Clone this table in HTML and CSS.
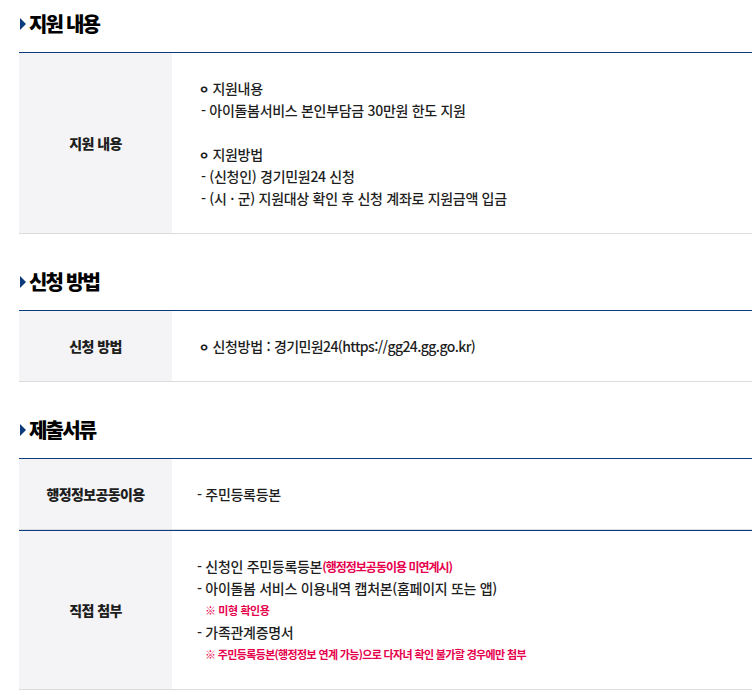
FILE: index.html
```html
<!DOCTYPE html>
<html lang="ko">
<head>
    <meta charset="UTF-8"/>
    <meta name="viewport" content="width=device-width, initial-scale=1.0"/>
    <title>지원 안내</title>
    <link rel="stylesheet" href="styles.css">
</head>
<body>

<div class="content">

    <section class="section">
        <h2 class="sec-title">지원 내용</h2>
        <table class="info-table">
            <tr>
                <th>지원 내용</th>
                <td>
                    <p><span class="dot">ㅇ</span> 지원내용</p>
                    <p class="sub">- 아이돌봄서비스 본인부담금 30만원 한도 지원</p>
                    <p>&nbsp;</p>
                    <p><span class="dot">ㅇ</span> 지원방법</p>
                    <p class="sub">- (신청인) 경기민원24 신청</p>
                    <p class="sub">- (시 · 군) 지원대상 확인 후 신청 계좌로 지원금액 입금</p>
                </td>
            </tr>
        </table>
    </section>

    <section class="section">
        <h2 class="sec-title">신청 방법</h2>
        <table class="info-table">
            <tr>
                <th>신청 방법</th>
                <td>
                    <p><span class="dot">ㅇ</span> 신청방법 : <span class="url">경기민원24(https://gg24.gg.go.kr)</span></p>
                </td>
            </tr>
        </table>
    </section>

    <section class="section">
        <h2 class="sec-title">제출서류</h2>
        <table class="info-table">
            <tr>
                <th>행정정보공동이용</th>
                <td>
                    <p>- 주민등록등본</p>
                </td>
            </tr>
        </table>
        <table class="info-table">
            <tr>
                <th>직접 첨부</th>
                <td>
                    <p>- 신청인 주민등록등본<span class="note inline">(행정정보공동이용 미연계시)</span></p>
                    <p>- 아이돌봄 서비스 이용내역 캡처본(홈페이지 또는 앱)</p>
                    <p class="note indent">※ 미형 확인용</p>
                    <p>- 가족관계증명서</p>
                    <p class="note indent long">※ 주민등록등본(행정정보 연계 가능)으로 다자녀 확인 불가할 경우에만 첨부</p>
                </td>
            </tr>
        </table>
    </section>

</div>

</body>
</html>
```

FILE: styles.css
```css
:root {
    --navy: #0d3c7d;
    --text-color: #1e1e1e;
    --line-color: #dcdcdc;
    --label-bg: #f4f4f6;
    --note-color: #e6004c;
}

* {
    margin: 0;
    padding: 0;
    box-sizing: border-box;
}

body {
    font-family: "Noto Sans CJK KR", "Noto Sans", sans-serif;
    font-size: 14px;
    line-height: 22px;
    letter-spacing: -0.3px;
    font-weight: 500;
    color: var(--text-color);
    background-color: #fff;
    overflow: hidden;
}

.content {
    padding-left: 19px;
    width: 780px;
}

.section {
    margin-top: 33px;
}

.section:first-child {
    margin-top: 9px;
}

.sec-title {
    position: relative;
    padding-left: 10px;
    font-size: 20px;
    line-height: 30px;
    letter-spacing: -1.8px;
    font-weight: 900;
    color: #000;
    margin-bottom: 13px;
}

.sec-title::before {
    content: "";
    position: absolute;
    left: 1px;
    top: 9px;
    border-style: solid;
    border-width: 6px 0 6px 6px;
    border-color: transparent transparent transparent var(--navy);
}

.info-table {
    width: 100%;
    border-collapse: collapse;
    border-top: 1px solid var(--navy);
    border-bottom: 1px solid var(--line-color);
}

.info-table th {
    width: 153px;
    background-color: var(--label-bg);
    font-weight: 800;
    letter-spacing: -0.6px;
    text-align: center;
    vertical-align: middle;
    padding: 24px 0;
}

.info-table td {
    padding: 24px 25px;
    vertical-align: middle;
}

.info-table p {
    height: 22px;
    white-space: nowrap;
}

.dot {
    font-size: 11px;
    font-weight: 900;
    margin-left: 2px;
}

.url {
    letter-spacing: -0.6px;
}

.sub {
    padding-left: 4px;
}

.note {
    color: var(--note-color);
    font-size: 11px;
    font-weight: 700;
    letter-spacing: -0.4px;
}

.note.inline {
    font-size: 12px;
    letter-spacing: -1px;
}

.note.long {
    letter-spacing: -0.65px;
}

.indent {
    padding-left: 8px;
}
```
